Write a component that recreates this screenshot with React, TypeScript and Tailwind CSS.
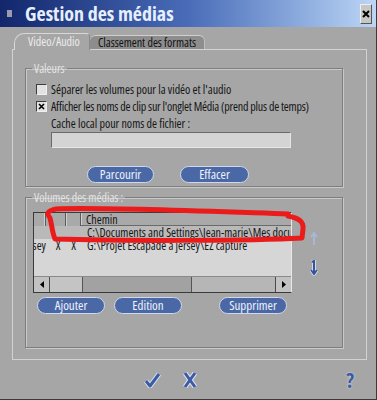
import React from "react";

const FONT = "font-['Open_Sans','Noto_Sans',sans-serif] [font-stretch:75%]";

function Btn({ children, cls }: { children: React.ReactNode; cls: string }) {
  return (
    <div
      className={
        "h-[17px] rounded-full bg-[#4a68a6] border border-[#cfd8ec] text-[#eef2fb] text-[13px] leading-none flex items-center justify-center whitespace-nowrap " +
        cls
      }
    >
      {children}
    </div>
  );
}

function Check({ checked }: { checked?: boolean }) {
  return (
    <div className="w-[11px] h-[11px] bg-[#e2e2e2] border border-t-[#3c3c3c] border-l-[#3c3c3c] border-r-[#f0f0f0] border-b-[#f0f0f0] flex items-center justify-center shrink-0">
      {checked && (
        <svg width="7" height="7" viewBox="0 0 7 7">
          <path d="M1 1 L6 6 M6 1 L1 6" stroke="#000" strokeWidth="1.6" />
        </svg>
      )}
    </div>
  );
}

export default function App() {
  return (
    <div className={"relative w-[377px] h-[400px] bg-[#a6a6a6] overflow-hidden text-[#151515] border-r border-b border-r-[#3a3a3a] border-b-[#3a3a3a] " + FONT}>
      {/* Title bar */}
      <div className="h-[27px] flex items-center bg-gradient-to-r from-[#13266c] via-[#4a6cb8] to-[#bcd6f5]">
        <div className="ml-[7px] w-[5px] h-[7px] bg-[#9a9cae]" />
        <div className="ml-[13px] text-[20px] font-bold text-[#e6efff] leading-none whitespace-nowrap">Gestion des médias</div>
        <div className="ml-auto mr-[4px] w-[12px] h-[20px] bg-[#c6c6c6] border border-t-[#eeeeee] border-l-[#eeeeee] border-r-[#555] border-b-[#555] flex items-center justify-center">
          <svg width="8" height="8" viewBox="0 0 8 8">
            <path d="M1 1 L7 7 M7 1 L1 7" stroke="#000" strokeWidth="2" />
          </svg>
        </div>
      </div>

      {/* Tabs */}
      <div className="flex items-end h-[22px] pl-[14px]">
        <div className="h-[17px] w-[76px] rounded-tl-[10px] rounded-tr-[4px] border-t border-l border-r border-[#d8d8d8] border-r-[#8a8a8a] bg-[#a6a6a6] text-[#ececec] text-[12px] flex items-center justify-center pl-[4px] -mb-[1px] relative z-10 whitespace-nowrap">
          Video/Audio
        </div>
        <div className="h-[14px] w-[115px] rounded-tl-[6px] rounded-tr-[6px] border-t border-r border-[#d0d0d0] border-r-[#c0c0c0] bg-[#8d8d8d] text-[#111] text-[12px] flex items-center justify-center whitespace-nowrap">
          Classement des formats
        </div>
      </div>

      {/* Panel */}
      <div className="ml-[12px] w-[355px] h-[311px] border border-[#d2d2d2] pt-[12px] pl-[12px]">
        <fieldset className="w-[318px] h-[125px] border border-[#7e7e7e] shadow-[inset_1px_1px_0_#c9c9c9,1px_1px_0_#c9c9c9]">
          <legend className="ml-[6px] px-[2px] text-[12px] leading-[13px] text-[#e4e4e4]">Valeurs</legend>
          <div className="pl-[10px] pt-[6px] text-[12px] whitespace-nowrap">
            <div className="h-[17px] flex items-center gap-[4px]">
              <Check />
              <span>Séparer les volumes pour la vidéo et l'audio</span>
            </div>
            <div className="h-[17px] flex items-center gap-[4px]">
              <Check checked />
              <span className="tracking-[-0.2px]">Afficher les noms de clip sur l'onglet Média (prend plus de temps)</span>
            </div>
            <div className="h-[17px] flex items-center pl-[15px]">Cache local pour noms de fichier :</div>
            <div className="ml-[15px] w-[240px] h-[16px] bg-[#d4d4d4] border border-t-[#6a6a6a] border-l-[#6a6a6a] border-r-[#e6e6e6] border-b-[#e6e6e6]" />
            <div className="flex mt-[18px] ml-[51px] gap-[26px]">
              <Btn cls="w-[67px]">Parcourir</Btn>
              <Btn cls="w-[69px]">Effacer</Btn>
            </div>
          </div>
        </fieldset>

        <fieldset className="mt-[4px] w-[318px] h-[157px] border border-[#7e7e7e] shadow-[inset_1px_1px_0_#c9c9c9,1px_1px_0_#c9c9c9]">
          <legend className="ml-[6px] px-[2px] text-[12px] leading-[13px] text-[#e4e4e4] whitespace-nowrap">Volumes des médias :</legend>
          <div className="flex pl-[7px] pt-[8px]">
            {/* List */}
            <div className="w-[259px] h-[81px] bg-[#d6d6d6] border border-t-[#3a3a3a] border-l-[#3a3a3a] border-r-[#e8e8e8] border-b-[#3a3a3a] flex flex-col text-[12px] overflow-hidden">
              <div className="flex h-[13px] bg-[#a9a9a9] shrink-0">
                <div className="w-[12px] border-r border-[#5a5a5a] shadow-[inset_-1px_0_0_#d0d0d0]" />
                <div className="w-[20px] border-r border-[#5a5a5a]" />
                <div className="w-[15px] border-r border-[#5a5a5a] shadow-[inset_1px_0_0_#d0d0d0]" />
                <div className="flex-1 pl-[5px] leading-[13px] border-b border-[#6a6a6a] shadow-[inset_1px_0_0_#d0d0d0]">Chemin</div>
              </div>
              <div className="flex h-[13px] bg-[#b9b9b9] shrink-0 leading-[13px]">
                <div className="w-[47px]" />
                <div className="flex-1 pl-[6px] whitespace-nowrap overflow-hidden">C:\Documents and Settings\Jean-marie\Mes documents\Vidéos</div>
              </div>
              <div className="flex h-[14px] shrink-0 leading-[14px] items-start">
                <div className="w-[12px] h-[14px] overflow-hidden flex justify-end whitespace-nowrap">Escapade à jersey</div>
                <div className="w-[20px] text-center pl-[4px]">X</div>
                <div className="w-[15px] text-center">X</div>
                <div className="flex-1 h-[14px] pl-[6px] whitespace-nowrap overflow-hidden">G:\Projet Escapade à jersey\EZ capture</div>
              </div>
              <div className="flex-1" />
              {/* Scrollbar */}
              <div className="flex h-[16px] shrink-0 bg-[#b4b4b4] border-t border-[#8a8a8a]">
                <div className="w-[16px] bg-[#c2c2c2] border-r border-[#4a4a4a] flex items-center justify-center">
                  <svg width="4" height="7" viewBox="0 0 4 7"><path d="M4 0 L0 3.5 L4 7 Z" fill="#000" /></svg>
                </div>
                <div className="w-[32px] bg-[#c4c4c4]" />
                <div className="w-[110px] bg-[#a2a2a2] border-l border-r border-[#555]" />
                <div className="flex-1 bg-[#b6b6b6]" />
                <div className="w-[16px] bg-[#c2c2c2] border-l border-[#4a4a4a] flex items-center justify-center">
                  <svg width="4" height="7" viewBox="0 0 4 7"><path d="M0 0 L4 3.5 L0 7 Z" fill="#000" /></svg>
                </div>
              </div>
            </div>
            {/* arrows */}
            <div className="ml-[18px] pt-[20px] flex flex-col">
              <svg width="8" height="14" viewBox="0 0 8 14">
                <path d="M4 13 L4 2 M1 5 L4 1 L7 5" stroke="#a7b7d6" strokeWidth="2" fill="none" />
              </svg>
              <svg className="mt-[14px]" width="8" height="16" viewBox="0 0 8 16">
                <path d="M2 2 L4 1 L4 13 M1 10 L4 14 L7 10" stroke="#e4e8f2" strokeWidth="3.5" fill="none" />
                <path d="M2 2 L4 1 L4 13 M1 10 L4 14 L7 10" stroke="#35559d" strokeWidth="2" fill="none" />
              </svg>
            </div>
          </div>
          <div className="flex mt-[4px] ml-[11px]">
            <Btn cls="w-[68px]">Ajouter</Btn>
            <Btn cls="w-[68px] ml-[9px]">Edition</Btn>
            <Btn cls="w-[68px] ml-[37px]">Supprimer</Btn>
          </div>
        </fieldset>
      </div>

      {/* Bottom bar */}
      <div className="flex items-center h-[40px]">
        <svg className="ml-[144px]" width="17" height="16" viewBox="0 0 17 16">
          <path d="M2 9 L6 14 L15 2" stroke="#dde3f0" strokeWidth="5" fill="none" strokeLinejoin="round" />
          <path d="M2 9 L6 14 L15 2" stroke="#3b5ba3" strokeWidth="3" fill="none" strokeLinejoin="round" />
        </svg>
        <svg className="ml-[22px]" width="14" height="16" viewBox="0 0 14 16">
          <path d="M2 1 L12 15 M12 1 L2 15" stroke="#dde3f0" strokeWidth="5" fill="none" />
          <path d="M2 1 L12 15 M12 1 L2 15" stroke="#3b5ba3" strokeWidth="3" fill="none" />
        </svg>
        <div className="ml-auto mr-[22px] text-[21px] font-bold text-[#3b5ba3] leading-none [text-shadow:0_0_2px_#e6ebf5]">?</div>
      </div>

      {/* red annotation */}
      <svg className="absolute inset-0 pointer-events-none" width="377" height="400" viewBox="0 0 377 400">
        <path
          d="M288 216 C298 218 304 221 303 229 L302 238 C250 241 120 241 55 239 C52 232 52 225 50 218 C47 214 46 211 56 209 C100 207 200 211 288 214"
          stroke="#ec1b1b"
          strokeWidth="5"
          fill="none"
          strokeLinecap="round"
          strokeLinejoin="round"
        />
      </svg>
    </div>
  );
}
